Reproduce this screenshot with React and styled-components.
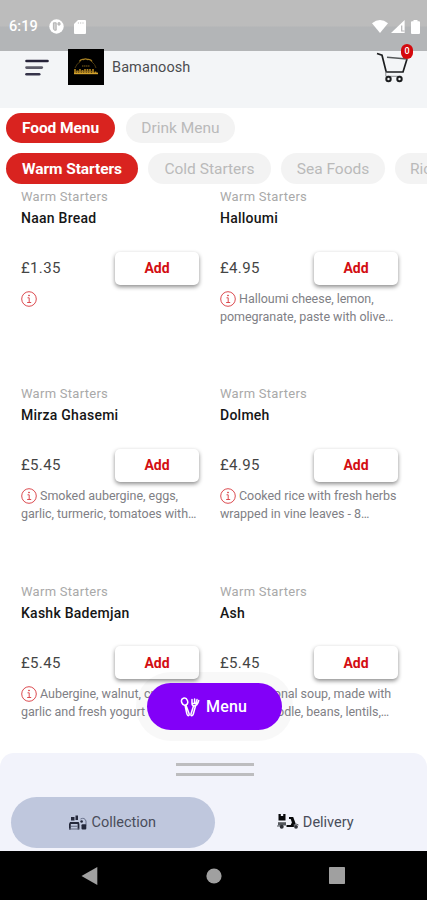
import React, { useState } from 'react';
import styled, { createGlobalStyle } from 'styled-components';

const GlobalStyle = createGlobalStyle`
  * {
    box-sizing: border-box;
  }

  body {
    margin: 0;
    background: #fff;
    font-family: Roboto, 'Liberation Sans', sans-serif;
  }

  button {
    border: 0;
    padding: 0;
    font-family: inherit;
  }

  svg {
    display: block;
    flex: none;
  }
`;

const Screen = styled.div`
  position: relative;
  display: flex;
  flex-direction: column;
  width: 427px;
  height: 900px;
  overflow: hidden;
  background: #fff;
`;

const StatusBar = styled.div`
  display: flex;
  align-items: center;
  flex: none;
  height: 51px;
  padding: 2px 7px 0 9px;
  background: linear-gradient(#bcbcbc 26px, #b3b5b7 27px);
  color: #fff;
`;

const Clock = styled.span`
  width: 40px;
  font-size: 14.5px;
  font-weight: 500;
  letter-spacing: 0.1px;
`;

const StatusIcons = styled.div`
  display: flex;
  align-items: center;
  gap: ${({ gap }) => gap}px;
  margin-left: ${({ end }) => (end ? 'auto' : 0)};
`;

const Header = styled.header`
  display: flex;
  align-items: flex-start;
  flex: none;
  height: 57px;
  padding: 0 13px 0 25px;
  background: #f3f5f7;
`;

const MenuToggle = styled.button`
  width: 24px;
  margin: 8px 20px 0 0;
  background: none;
`;

const Logo = styled.div`
  width: 36px;
  height: 36px;
  margin: -2px 8px 0 -1px;
  background: #000;
`;

const RestaurantName = styled.h1`
  margin: 7px 0 0;
  color: #4b4d50;
  font-size: 14.5px;
  font-weight: 400;
  line-height: 19px;
  letter-spacing: 0.1px;
`;

const CartButton = styled.button`
  position: relative;
  width: 38px;
  height: 34px;
  margin-left: auto;
  background: none;
`;

const CartBadge = styled.span`
  position: absolute;
  top: -7px;
  right: 1px;
  width: 12px;
  height: 15px;
  border-radius: 6px;
  background: #d4090d;
  color: #fff;
  font-size: 9px;
  font-weight: 500;
  line-height: 15px;
  text-align: center;
`;

const TabRow = styled.nav`
  display: flex;
  flex: none;
  gap: ${({ gap }) => gap}px;
  padding: ${({ top }) => top}px 0 0 6px;
`;

const Tab = styled.button`
  flex: none;
  width: ${({ width }) => width}px;
  height: ${({ height }) => height}px;
  border-radius: 16px;
  background: ${({ active }) => (active ? '#d9231f' : '#f3f3f3')};
  color: ${({ active }) => (active ? '#fff' : '#bababa')};
  font-size: 15.5px;
  font-weight: ${({ active }) => (active ? 700 : 400)};
  letter-spacing: ${({ active }) => (active ? -0.08 : 0)}px;
  white-space: nowrap;
`;

const Dishes = styled.main`
  display: grid;
  grid-template-columns: 178px 178px;
  grid-auto-rows: 197.3px;
  column-gap: 21px;
  flex: 1;
  min-height: 0;
  padding: 5px 0 0 21px;
  overflow: hidden;
`;

const Category = styled.div`
  color: #a9a9a9;
  font-size: 13px;
  line-height: 16px;
  letter-spacing: 0.28px;
`;

const DishName = styled.h2`
  margin: 4px 0 0;
  color: #161616;
  font-size: 14px;
  font-weight: 500;
  line-height: 18px;
  letter-spacing: 0.25px;
`;

const PriceRow = styled.div`
  display: flex;
  align-items: center;
  justify-content: space-between;
  height: 34px;
  margin-top: 24px;
`;

const Price = styled.span`
  color: #444;
  font-size: 15px;
  letter-spacing: 0.35px;
`;

const AddButton = styled.button`
  width: 84px;
  height: 33px;
  border-radius: 5px;
  background: #fff;
  box-shadow: 0 2px 4px rgba(0, 0, 0, 0.45);
  color: #d30e12;
  font-size: 14px;
  font-weight: 700;
  letter-spacing: 0;
`;

const Description = styled.div`
  margin-top: 5px;
  color: #808085;
  font-size: 12.5px;
  line-height: 18px;
  letter-spacing: -0.03px;
  white-space: nowrap;
`;

const DescriptionLine = styled.div`
  display: flex;
  align-items: center;
  gap: 3px;
  height: 18px;
`;

const FloatingMenu = styled.button`
  position: absolute;
  top: 683px;
  left: 147px;
  display: flex;
  align-items: center;
  gap: 6px;
  width: 135px;
  height: 47px;
  padding-left: 33px;
  border-radius: 24px;
  background: #8200f8;
  box-shadow: 0 0 0 11px rgba(90, 90, 90, 0.045);
  color: #fff;
  font-size: 16px;
  font-weight: 500;
  letter-spacing: 0.2px;
`;

const Sheet = styled.footer`
  flex: none;
  height: 98px;
  padding-top: 10px;
  border-radius: 14px 14px 0 0;
  background: #f2f3fb;
`;

const Handle = styled.div`
  width: 78px;
  height: 13px;
  margin: 0 0 0 176px;
  border: solid #bdbdbf;
  border-width: 3px 0;
`;

const OrderTypes = styled.div`
  display: flex;
  margin: 21px 11px 0;
`;

const OrderType = styled.button`
  display: flex;
  align-items: center;
  justify-content: center;
  gap: 4px;
  width: ${({ width }) => width}px;
  height: 51px;
  border-radius: 26px;
  background: ${({ active }) => (active ? '#bfc7dd' : 'transparent')};
  color: #494d5a;
  font-size: 14.5px;
  letter-spacing: 0;
`;

const NavigationBar = styled.div`
  display: flex;
  align-items: center;
  justify-content: space-between;
  flex: none;
  height: 49px;
  padding: 0 82px 0 81px;
  background: #000;
`;

const ProfileIcon = () => (
  <svg width="15" height="15" viewBox="0 0 15 15">
    <circle cx="7.5" cy="7.5" r="7.2" fill="#fff" />
    <path d="M4.4 3.8h2.8v7.4H5.6q-1.2-.4-1.2-2zM9 3.8h2v2.2H9z" fill="#d2d2d2" stroke="#aeaeae" strokeWidth="0.9" />
  </svg>
);

const SdCardIcon = () => (
  <svg width="12" height="14" viewBox="0 0 12 14">
    <path d="M4 0h7q1 0 1 1v12q0 1-1 1H1q-1 0-1-1V4z" fill="#fff" />
    <path d="M4.4 2v2M6.7 2v2M9 2v2" stroke="#d5d5d5" strokeWidth="0.9" />
  </svg>
);

const WifiIcon = () => (
  <svg width="16" height="13" viewBox="0 0 16 13">
    <path d="M0 3.2Q8-3 16 3.2L8 13z" fill="#fff" />
  </svg>
);

const SignalIcon = () => (
  <svg width="14" height="13" viewBox="0 0 14 13">
    <path d="M0 13 13.6 0v13z" fill="#fff" />
    <path d="M10.7 5.5V11h2.9" fill="none" stroke="#b5b5b7" strokeWidth="1.2" />
  </svg>
);

const BatteryIcon = () => (
  <svg width="9" height="14" viewBox="0 0 9 14">
    <path d="M2.5 0h4v1.3H8q1 0 1 1V13q0 1-1 1H1q-1 0-1-1V2.3q0-1 1-1h1.5z" fill="#fff" />
  </svg>
);

const BurgerIcon = () => (
  <svg width="24" height="18" viewBox="0 0 24 18">
    <g strokeWidth="2.6" strokeLinecap="round">
      <path d="M1.5 2h21" stroke="#252238" />
      <path d="M1.5 8.6h15.3" stroke="#5d5c69" />
      <path d="M1.5 15.2h12.7" stroke="#35344a" />
    </g>
  </svg>
);

const LogoMark = () => (
  <svg width="36" height="36" viewBox="0 0 36 36" fill="none">
    <path d="M11.5 12.5q1-2.5 4-2 2-1.2 4 0 3.5-.5 4.5 2" stroke="#a98224" strokeWidth="1.4" />
    <path d="M7 19Q9 14 12 13M28 19q-1-4-4-6" stroke="#47360e" />
    <path d="M14 17h8" stroke="#80631c" strokeDasharray="1.5 0.5" />
    <path d="M7 20v5M9.5 21.5V25M12 20v5M14.5 21v4M17 20v5M19.5 20v5M22 20v5M25 20v5M27.5 22.5V25" stroke="#ad801b" strokeWidth="1.7" />
    <path d="M6 24.4h24" stroke="#d5a42e" strokeWidth="1.6" />
    <path d="M7 22.3h17" stroke="#9b7320" />
  </svg>
);

const CartIcon = () => (
  <svg width="38" height="34" viewBox="0 0 38 34" fill="none" stroke="#1b1d1f">
    <path d="M1 2.5 6 4.2 10.2 21H27L31 8" strokeWidth="1.7" />
    <path d="M11 6.3 31 8" stroke="#55585a" strokeWidth="1.5" />
    <path d="M9.8 20.5v4.8H25" stroke="#8b8e91" />
    <circle cx="12.5" cy="28" r="2.2" strokeWidth="2" />
    <circle cx="23.5" cy="28" r="2.2" strokeWidth="2" />
  </svg>
);

const InfoIcon = () => (
  <svg width="16" height="16" viewBox="0 0 16 16" fill="none" stroke="#dc4b50">
    <circle cx="8" cy="8" r="7.3" />
    <path d="M6.5 6.8h1.7v4.6M6.2 11.5h4" />
    <circle cx="8" cy="4.5" r="0.5" fill="#dc4b50" />
  </svg>
);

const CutleryIcon = () => (
  <svg width="20" height="20" viewBox="0 0 20 20" fill="none" stroke="#fff" strokeWidth="1.5" strokeLinecap="round" strokeLinejoin="round">
    <ellipse cx="4.6" cy="4.6" rx="3" ry="3.6" transform="rotate(-20 4.6 4.6)" />
    <path d="M6 8.3 9 16.5Q9.7 19 8 18.6 7 18 6.8 16.5L5.2 9" />
    <path d="M12 2.5v4q0 2.2 2 2.4 3.5 0 4.7-5.4M14.6 2v4M17 2.6l-1 4M13 6.5h4" />
    <path d="M13.5 9 11 17q-.5 2 1 1.7 1-.5 1.4-2L15.5 9" />
  </svg>
);

const CollectionIcon = () => (
  <svg width="18" height="16" viewBox="0 0 18 16" fill="#24283b">
    <path d="M2 2h3.5v3.5H2zM6.5.5H9V5H6.5zM1 7h8.7l.7 2H0zM0 9h1.8v5.5H0zM8.6 9h1.8v5.5H8.6z" />
    <path d="M2 10.8h6.5v1H2zM0 13.6h10v.9H0z" fill="#626980" />
    <path d="M11.5 4q4-2 5.5 2v4" fill="none" stroke="#68708a" />
    <rect x="12.5" y="9.3" width="4.8" height="5.2" rx="1" />
    <circle cx="12.6" cy="6.5" r="1.3" />
  </svg>
);

const DeliveryIcon = () => (
  <svg width="22" height="17" viewBox="0 0 22 17" fill="#08090b">
    <path d="M1.5 0h2.3v2h2.4V0h2.3v6.5h-7zM12 3h4.2l2.4 6.5-2 3.5H9.5v-2h4.2l1.2-2.5-1.2-3.6H12z" />
    <path d="M1 8.2h8v3.3H1z" fill="#55585e" />
    <circle cx="4.7" cy="12.8" r="2" fill="#303238" />
    <circle cx="19" cy="12.8" r="1.9" fill="#303238" />
    <path d="M0 12h3M16.5 11q2.5-2 5 0" fill="none" stroke="#55585e" />
  </svg>
);

const BackIcon = () => (
  <svg width="17" height="18" viewBox="0 0 17 18">
    <path d="M0.5 9 16.3 0v18z" fill="#a0a0a0" />
  </svg>
);

const HomeIcon = () => (
  <svg width="16" height="16" viewBox="0 0 16 16">
    <circle cx="8" cy="8" r="7.6" fill="#a0a0a0" />
  </svg>
);

const RecentsIcon = () => (
  <svg width="16" height="17" viewBox="0 0 16 17">
    <rect width="16" height="17" rx="0.7" fill="#a0a0a0" />
  </svg>
);

const menus = [
  { label: 'Food Menu', width: 109 },
  { label: 'Drink Menu', width: 109 },
];

const categories = [
  { label: 'Warm Starters', width: 132 },
  { label: 'Cold Starters', width: 123 },
  { label: 'Sea Foods', width: 104 },
  { label: 'Rice Dishes', width: 110 },
];

const dishes = [
  { name: 'Naan Bread', price: '£1.35', lines: ['', ''] },
  { name: 'Halloumi', price: '£4.95', lines: ['Halloumi cheese, lemon,', 'pomegranate, paste with olive…'] },
  { name: 'Mirza Ghasemi', price: '£5.45', lines: ['Smoked aubergine, eggs,', 'garlic, turmeric, tomatoes with…'] },
  { name: 'Dolmeh', price: '£4.95', lines: ['Cooked rice with fresh herbs', 'wrapped in vine leaves - 8…'] },
  { name: 'Kashk Bademjan', price: '£5.45', lines: ['Aubergine, walnut, cream,', 'garlic and fresh yogurt'] },
  { name: 'Ash', price: '£5.45', lines: ['Traditional soup, made with', 'greens, noodle, beans, lentils,…'] },
];

const Dish = ({ name, price, lines, onAdd }) => (
  <article>
    <Category>Warm Starters</Category>
    <DishName>{name}</DishName>
    <PriceRow>
      <Price>{price}</Price>
      <AddButton onClick={onAdd}>Add</AddButton>
    </PriceRow>
    <Description>
      <DescriptionLine>
        <InfoIcon />
        {lines[0]}
      </DescriptionLine>
      <DescriptionLine>{lines[1]}</DescriptionLine>
    </Description>
  </article>
);

export default function App() {
  const [menu, setMenu] = useState('Food Menu');
  const [category, setCategory] = useState('Warm Starters');
  const [orderType, setOrderType] = useState('collection');
  const [count, setCount] = useState(0);

  return (
    <Screen>
      <GlobalStyle />
      <StatusBar>
        <Clock>6:19</Clock>
        <StatusIcons gap={10}>
          <ProfileIcon />
          <SdCardIcon />
        </StatusIcons>
        <StatusIcons gap={3} end>
          <WifiIcon />
          <SignalIcon />
          <span />
          <BatteryIcon />
        </StatusIcons>
      </StatusBar>
      <Header>
        <MenuToggle aria-label="Open navigation">
          <BurgerIcon />
        </MenuToggle>
        <Logo>
          <LogoMark />
        </Logo>
        <RestaurantName>Bamanoosh</RestaurantName>
        <CartButton aria-label="Cart">
          <CartIcon />
          <CartBadge>{count}</CartBadge>
        </CartButton>
      </Header>
      <TabRow top={5} gap={11}>
        {menus.map(({ label, width }) => (
          <Tab key={label} width={width} height={30} active={menu === label} onClick={() => setMenu(label)}>
            {label}
          </Tab>
        ))}
      </TabRow>
      <TabRow top={10} gap={10}>
        {categories.map(({ label, width }) => (
          <Tab key={label} width={width} height={31} active={category === label} onClick={() => setCategory(label)}>
            {label}
          </Tab>
        ))}
      </TabRow>
      <Dishes>
        {dishes.map(dish => (
          <Dish key={dish.name} {...dish} onAdd={() => setCount(count + 1)} />
        ))}
      </Dishes>
      <FloatingMenu>
        <CutleryIcon />
        Menu
      </FloatingMenu>
      <Sheet>
        <Handle />
        <OrderTypes>
          <OrderType width={203.5} active={orderType === 'collection'} onClick={() => setOrderType('collection')}>
            <CollectionIcon />
            Collection
          </OrderType>
          <OrderType width={201.5} active={orderType === 'delivery'} onClick={() => setOrderType('delivery')}>
            <DeliveryIcon />
            Delivery
          </OrderType>
        </OrderTypes>
      </Sheet>
      <NavigationBar>
        <BackIcon />
        <HomeIcon />
        <RecentsIcon />
      </NavigationBar>
    </Screen>
  );
}
